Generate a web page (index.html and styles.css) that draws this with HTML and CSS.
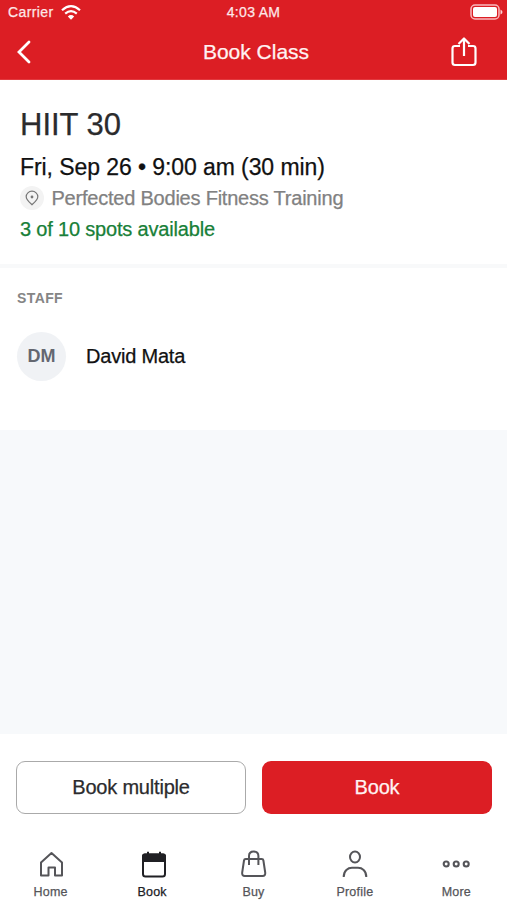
FILE: index.html
```html
<!DOCTYPE html>
<html lang="en">
<head>
<meta charset="utf-8">
<title>Book Class</title>
<link rel="stylesheet" href="styles.css">
</head>
<body>
<div class="app">
  <header class="header">
    <div class="status">
      <div class="carrier"><span>Carrier</span>
        <svg class="wifi" width="20" height="15" viewBox="0 0 20 15" fill="none" stroke="currentColor" stroke-width="2.200"><path d="M1 5.200Q10-2.800 19 5.200M4.200 8.700Q10 3.700 15.800 8.700"/><path d="M10 14.800L6.800 11.500Q10 8.600 13.200 11.500Z" fill="currentColor" stroke="none"/></svg>
      </div>
      <span class="time">4:03 AM</span>
      <svg class="battery" width="33" height="16" viewBox="0 0 33 16"><rect x="1" y="1" width="28" height="14" rx="4" fill="none" stroke="#f9b9bd" stroke-width="1.500"/><rect x="3" y="3" width="24" height="10" rx="2" fill="#fff"/><path d="M30.500 5.500Q32.500 6.500 32.500 8T30.500 10.500Z" fill="#fbd2d4"/></svg>
    </div>
    <div class="nav">
      <svg class="back" width="16" height="24" viewBox="0 0 16 24" fill="none" stroke="currentColor" stroke-width="2.800" stroke-linecap="round"><path d="M13 2L3 12L13 22"/></svg>
      <h1 class="nav-title">Book Class</h1>
      <svg class="share" width="26" height="30" viewBox="0 0 26 30" fill="none" stroke="currentColor" stroke-width="2.200" stroke-linejoin="round"><path d="M9 9H4Q1.500 9 1.500 11.500V25.500Q1.500 28 4 28H22Q24.500 28 24.500 25.500V11.500Q24.500 9 22 9H17M13 19V1.500M7.500 7L13 1.500L18.500 7"/></svg>
    </div>
  </header>
  <section class="summary">
    <h2 class="class-name">HIIT 30</h2>
    <p class="when">Fri, Sep 26 • 9:00 am (30 min)</p>
    <p class="place">
      <span class="pin"><svg width="14" height="16" viewBox="0 0 14 16" fill="none" stroke="currentColor" stroke-width="1.200"><path d="M7 14.700C4.500 12.500 1.200 9.800 1.200 6.800A5.800 5.600 0 0 1 12.800 6.800C12.800 9.800 9.500 12.500 7 14.700Z"/><circle cx="7" cy="7" r="1.400" fill="currentColor" stroke="none"/></svg></span>
      <span class="place-name">Perfected Bodies Fitness Training</span>
    </p>
    <p class="spots">3 of 10 spots available</p>
  </section>
  <section class="staff">
    <h3 class="staff-title">STAFF</h3>
    <div class="person"><span class="avatar">DM</span><span class="person-name">David Mata</span></div>
  </section>
  <main class="blank"></main>
  <footer class="footer">
    <div class="actions">
      <button class="btn outline"><span>Book multiple</span></button>
      <button class="btn primary"><span>Book</span></button>
    </div>
    <nav class="tabs">
      <a class="tab"><svg width="28" height="30" viewBox="0 0 28 30" fill="none" stroke="currentColor" stroke-width="2" stroke-linejoin="round"><path d="M4 12.500L14.500 3L25 12.500V25.500H18V17.500H11.500V25.500H4Z"/></svg><span>Home</span></a>
      <a class="tab active"><svg width="28" height="30" viewBox="0 0 28 30" fill="none" stroke="currentColor" stroke-width="2"><rect x="5" y="4.500" width="22" height="22" rx="2.500"/><path d="M4 12V6Q4 3.500 6.500 3.500H25.500Q28 3.500 28 6V12Z" fill="currentColor" stroke="none"/><path d="M10 1.800V5M22 1.800V5"/></svg><span>Book</span></a>
      <a class="tab"><svg width="28" height="30" viewBox="0 0 28 30" fill="none" stroke="currentColor" stroke-width="2" stroke-linejoin="round"><path d="M6.700 9H22.700Q24.200 9 24.400 10.500L26.200 22.500Q26.600 26 23.600 26H5.800Q2.800 26 3.200 22.500L5 10.500Q5.200 9 6.700 9Z"/><path d="M10 15V6Q10 1.500 14.700 1.500T19.400 6V15"/></svg><span>Buy</span></a>
      <a class="tab"><svg width="28" height="30" viewBox="0 0 28 30" fill="none" stroke="currentColor" stroke-width="2"><ellipse cx="14" cy="7" rx="5" ry="5.500"/><path d="M2.700 27C2.700 20.500 7 17.800 11 17.800H17C21 17.800 25.300 20.500 25.300 27"/></svg><span>Profile</span></a>
      <a class="tab"><svg width="28" height="30" viewBox="0 0 28 30" fill="none" stroke="currentColor" stroke-width="2.100"><circle cx="4.200" cy="14" r="2.500"/><circle cx="14.200" cy="14" r="2.500"/><circle cx="24.200" cy="14" r="2.500"/></svg><span>More</span></a>
    </nav>
  </footer>
</div>
</body>
</html>
```
FILE: styles.css
```css
* { box-sizing: border-box; margin: 0; padding: 0; }
body { font-family: "Liberation Sans", Arial, sans-serif; background: #fff; -webkit-text-stroke: 0.25px; }
svg { display: block; flex: none; overflow: visible; }
.app { width: 507px; height: 900px; display: flex; flex-direction: column; overflow: hidden; }
.header { height: 80px; background: #dc1e24; color: #fff; border-bottom: 1px solid #e23a3f; flex: none; }
.status { height: 24px; padding: 0 4px 0 8px; display: grid; grid-template-columns: 1fr auto 1fr; align-items: center; font-size: 14px; line-height: 24px; }
.carrier { display: flex; align-items: center; gap: 7px; color: #fde7e8; letter-spacing: 0.4px; }
.wifi { color: #fff; }
.time { letter-spacing: 0.3px; margin-right: 4px; color: #fde7e8; }
.battery { justify-self: end; }
.nav { height: 55px; padding: 0 30px 0 16px; display: grid; grid-template-columns: 1fr auto 1fr; align-items: center; }
.nav-title { font-size: 21px; font-weight: 400; line-height: 28px; color: #fff2f2; margin-left: 19px; }
.share { justify-self: end; }
.summary { height: 184px; padding: 27px 20px 0; flex: none; }
.class-name { font-size: 31px; font-weight: 400; line-height: 36px; color: #2b2b2d; }
.when { font-size: 23px; line-height: 30px; margin-top: 9px; color: #111; letter-spacing: -0.08px; }
.place { display: flex; align-items: center; gap: 7.5px; height: 32px; font-size: 20px; color: #818181; letter-spacing: -0.22px; }
.pin { width: 24px; height: 24px; border-radius: 50%; background: #f3f3f3; color: #777; display: flex; align-items: center; justify-content: center; }
.spots { font-size: 20px; line-height: 30px; color: #188038; letter-spacing: -0.18px; }
.staff { height: 166px; padding: 20px 17px 0; border-top: 4px solid #f8f9fa; flex: none; }
.staff-title { font-size: 14px; line-height: 20px; color: #858585; letter-spacing: 0.4px; -webkit-text-stroke: 0; }
.person { display: flex; align-items: center; gap: 20px; margin-top: 24px; }
.avatar { width: 49px; height: 49px; border-radius: 50%; background: #f0f2f5; color: #646770; font-size: 18px; font-weight: 700; -webkit-text-stroke: 0; display: flex; align-items: center; justify-content: center; }
.person-name { font-size: 20px; color: #111; letter-spacing: -0.2px; }
.blank { flex: 1; background: #f7f9fb; }
.footer { height: 166px; padding: 27px 0 0; flex: none; }
.actions { display: grid; grid-template-columns: 1fr 1fr; gap: 16px; padding: 0 15px 0 16px; }
.btn { height: 53px; padding-bottom: 2px; border-radius: 9px; font: 400 20px/24px "Liberation Sans", Arial, sans-serif; letter-spacing: -0.2px; -webkit-text-stroke: 0.25px; }
.outline { background: #fff; border: 1px solid #aaa; color: #2b2b2d; }
.primary { background: #dc1e24; border: 0; color: #fff2f2; }
.tabs { display: grid; grid-template-columns: repeat(5, 1fr); margin-top: 36px; }
.tab { display: flex; flex-direction: column; align-items: center; color: #555559; font-size: 12.5px; line-height: 16px; gap: 4px; letter-spacing: 0.2px; }
.active { color: #202024; }
```
